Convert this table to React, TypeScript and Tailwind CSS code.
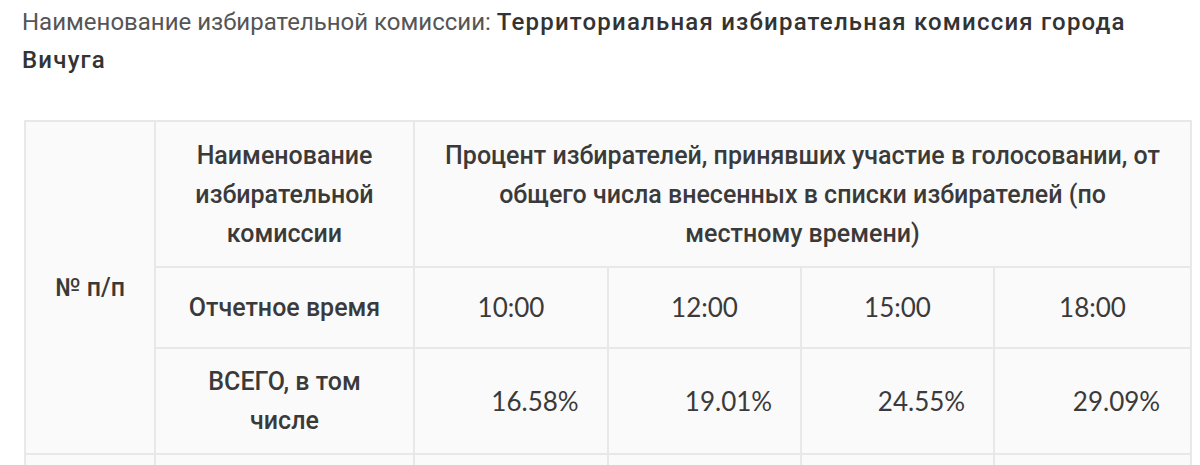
export default function App() {
  const times = ["10:00", "12:00", "15:00", "18:00"]
  const values = ["16.58%", "19.01%", "24.55%", "29.09%"]

  return (
    <div className="h-[465px] w-[1200px] overflow-hidden bg-white font-['Roboto',sans-serif] text-[#333]">
      <p className="w-[1150px] pl-[22px] pt-[3px] text-[24px] leading-[38px] text-[#555]">
        Наименование избирательной комиссии:{" "}
        <span className="font-medium tracking-[1.2px] text-[#333]">Территориальная избирательная комиссия города Вичуга</span>
      </p>

      <table className="ml-[24px] mt-[41px] w-[1168px] border-collapse bg-[#fafafa] text-center text-[25px] leading-[39px] text-[#3a3a3a]">
        <colgroup>
          <col className="w-[130px]" />
          <col className="w-[259px]" />
          <col className="w-[194px]" />
          <col className="w-[193px]" />
          <col className="w-[193px]" />
          <col />
        </colgroup>
        <tbody>
          <tr className="h-[146px]">
            <td rowSpan={3} className="border-2 border-[#e8e8e8] font-medium">
              № п/п
            </td>
            <td className="border-2 border-[#e8e8e8] px-5 font-medium">
              Наименование избирательной комиссии
            </td>
            <td colSpan={4} className="border-2 border-[#e8e8e8] px-6 font-medium">
              Процент избирателей, принявших участие в голосовании, от общего числа внесенных в списки избирателей (по местному времени)
            </td>
          </tr>
          <tr className="h-[81px]">
            <td className="border-2 border-[#e8e8e8] font-medium">Отчетное время</td>
            {times.map((t) => (
              <td key={t} className="border-2 border-[#e8e8e8] font-['Lato',sans-serif] text-[26px]">
                {t}
              </td>
            ))}
          </tr>
          <tr className="h-[106px]">
            <td className="border-2 border-[#e8e8e8] px-12 font-medium">ВСЕГО, в том числе</td>
            {values.map((v) => (
              <td key={v} className="border-2 border-[#e8e8e8] pl-12 font-['Lato',sans-serif] text-[26px]">
                {v}
              </td>
            ))}
          </tr>
          <tr className="h-[40px]">
            <td className="border-2 border-[#e8e8e8]" />
            <td className="border-2 border-[#e8e8e8]" />
            <td className="border-2 border-[#e8e8e8]" />
            <td className="border-2 border-[#e8e8e8]" />
            <td className="border-2 border-[#e8e8e8]" />
            <td className="border-2 border-[#e8e8e8]" />
          </tr>
        </tbody>
      </table>
    </div>
  )
}
